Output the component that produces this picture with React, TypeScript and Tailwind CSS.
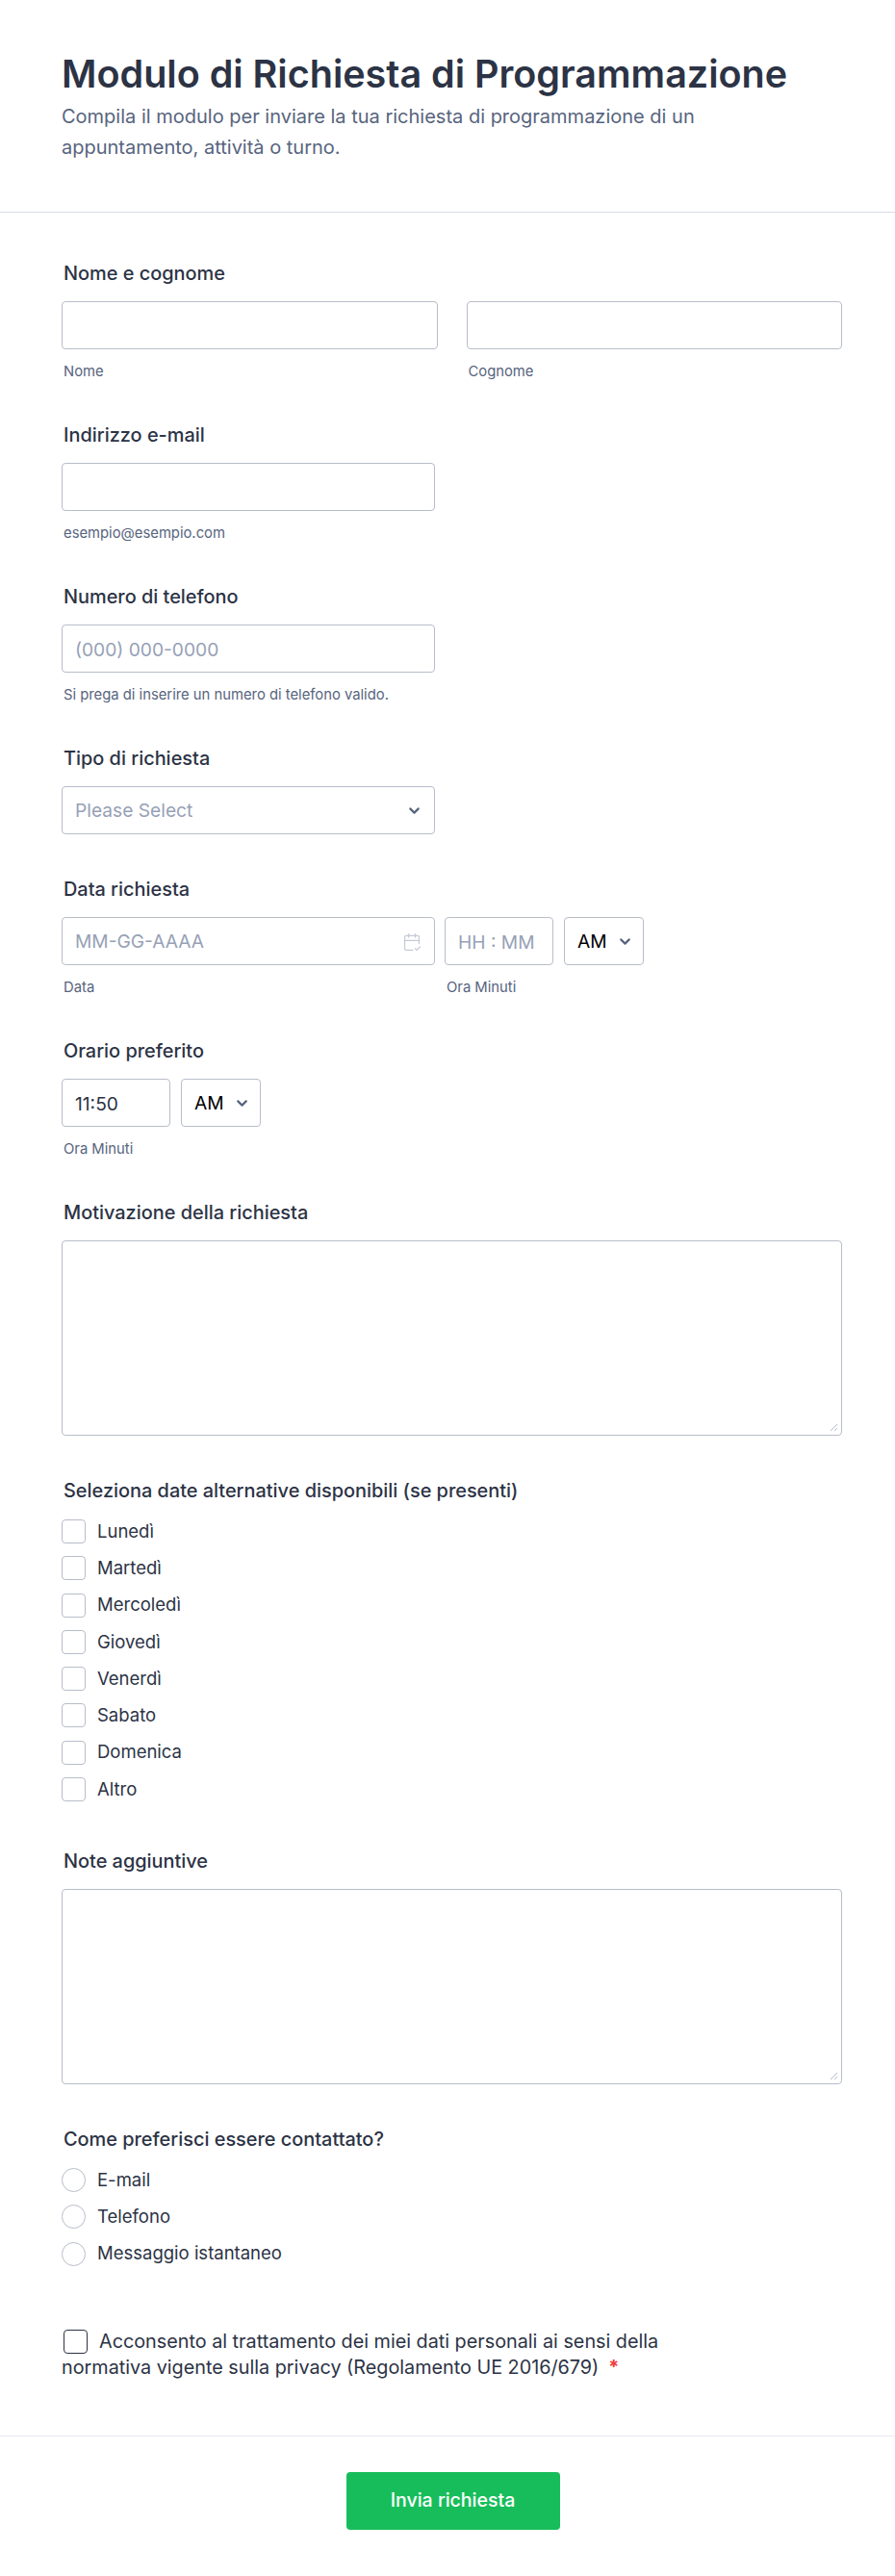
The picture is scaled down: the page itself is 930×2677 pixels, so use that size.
import React from 'react';
import { CalendarCheck2, ChevronDown } from 'lucide-react';

const inputClass =
  'h-[50px] w-full rounded-[4px] border border-[#b8bdc9] bg-white px-[13px] pt-[1px] text-[19.2px] text-[#2c3345] outline-none placeholder:text-[#97a1b6]';

const labelClass = 'pl-[2px] text-[19.9px] leading-[24px] font-medium text-[#2c3345]';

function Label({ children }: { children: React.ReactNode }) {
  return <div className={`mb-[17px] ${labelClass}`}>{children}</div>;
}

function Sub({ children }: { children: React.ReactNode }) {
  return <div className="mt-[14px] pl-[2px] text-[14.8px] leading-[18px] text-[#57647e]">{children}</div>;
}

function Ampm() {
  return (
    <div className="ml-[1px] flex h-[50px] w-[83px] shrink-0 items-center justify-between rounded-[4px] border border-[#b8bdc9] bg-white pt-[1px] pr-[10px] pl-[13px] text-[19.2px] text-black">
      <span>AM</span>
      <ChevronDown className="h-[17px] w-[17px] text-[#57647e]" strokeWidth={3} />
    </div>
  );
}

function CheckRow({ label, round }: { label: string; round?: boolean }) {
  return (
    <div className="flex h-[25px] items-center gap-[12px] text-[18.5px] text-[#2c3345]">
      <span className={`h-[25px] w-[25px] shrink-0 border border-[#b8bdc9] bg-white ${round ? 'rounded-full' : 'rounded-[4px]'}`} />
      <span>{label}</span>
    </div>
  );
}

function TextArea() {
  return (
    <div className="relative">
      <textarea className="block h-[203px] w-full resize-none rounded-[4px] border border-[#b8bdc9] bg-white outline-none" />
      <svg className="absolute right-[4px] bottom-[4px] h-[9px] w-[9px]" viewBox="0 0 9 9" fill="none" stroke="#b8bdc9" strokeWidth="1">
        <path d="M1 8L8 1M5 8L8 5" />
      </svg>
    </div>
  );
}

const days = ['Lunedì', 'Martedì', 'Mercoledì', 'Giovedì', 'Venerdì', 'Sabato', 'Domenica', 'Altro'];
const contacts = ['E-mail', 'Telefono', 'Messaggio istantaneo'];

export default function App() {
  return (
    <div className="min-h-[2677px] w-[930px] bg-white font-['Inter',sans-serif]">
      <header className="h-[221px] border-b border-[#d8dae9] px-[64px] pt-[50px]">
        <h1 className="text-[39.5px] leading-[54px] font-semibold text-[#2c3345]">Modulo di Richiesta di Programmazione</h1>
        <p className="mt-[1px] w-[760px] text-[20px] leading-[32px] text-[#57647e]">
          Compila il modulo per inviare la tua richiesta di programmazione di un appuntamento, attività o turno.
        </p>
      </header>

      <form className="flex flex-col gap-[45px] px-[64px] pt-[51px]">
        <div>
          <Label>Nome e cognome</Label>
          <div className="grid w-[811px] grid-cols-2 gap-[30px]">
            <div>
              <input className={inputClass} />
              <Sub>Nome</Sub>
            </div>
            <div>
              <input className={inputClass} />
              <Sub>Cognome</Sub>
            </div>
          </div>
        </div>

        <div className="w-[388px]">
          <Label>Indirizzo e-mail</Label>
          <input className={inputClass} />
          <Sub>esempio@esempio.com</Sub>
        </div>

        <div className="w-[388px]">
          <Label>Numero di telefono</Label>
          <input className={inputClass} placeholder="(000) 000-0000" />
          <Sub>Si prega di inserire un numero di telefono valido.</Sub>
        </div>

        <div className="w-[388px]">
          <Label>Tipo di richiesta</Label>
          <div className="flex h-[50px] items-center justify-between rounded-[4px] border border-[#b8bdc9] bg-white pt-[1px] pr-[12px] pl-[13px] text-[19.2px] text-[#97a1b6]">
            <span>Please Select</span>
            <ChevronDown className="h-[17px] w-[17px] text-[#57647e]" strokeWidth={3} />
          </div>
        </div>

        <div>
          <Label>Data richiesta</Label>
          <div className="flex gap-[10px]">
            <div className="w-[388px]">
              <div className="flex h-[50px] items-center justify-between rounded-[4px] border border-[#b8bdc9] bg-white pt-[1px] pr-[13px] pl-[13px] text-[19.2px] text-[#97a1b6]">
                <span>MM-GG-AAAA</span>
                <CalendarCheck2 className="h-[20px] w-[20px] text-[#c5cad6]" strokeWidth={1.5} />
              </div>
              <Sub>Data</Sub>
            </div>
            <div className="w-[113px]">
              <input className={inputClass} placeholder="HH : MM" />
              <Sub>Ora Minuti</Sub>
            </div>
            <Ampm />
          </div>
        </div>

        <div>
          <Label>Orario preferito</Label>
          <div className="flex gap-[10px]">
            <div className="w-[113px]">
              <input className={inputClass} defaultValue="11:50" />
              <Sub>Ora Minuti</Sub>
            </div>
            <Ampm />
          </div>
        </div>

        <div className="w-[811px]">
          <Label>Motivazione della richiesta</Label>
          <TextArea />
        </div>

        <div>
          <div className={`mb-[18px] ${labelClass}`}>Seleziona date alternative disponibili (se presenti)</div>
          <div className="flex flex-col gap-[13.3px]">
            {days.map((d) => (
              <CheckRow key={d} label={d} />
            ))}
          </div>
        </div>

        <div className="mt-[5px] w-[811px]">
          <Label>Note aggiuntive</Label>
          <TextArea />
        </div>

        <div>
          <div className={`mb-[18px] ${labelClass}`}>Come preferisci essere contattato?</div>
          <div className="flex flex-col gap-[13.3px]">
            {contacts.map((c) => (
              <CheckRow key={c} label={c} round />
            ))}
          </div>
        </div>

        <div className="mt-[20px] w-[660px] text-[19.8px] leading-[27px] text-[#2c3345]">
          <span className="mr-[12px] ml-[2px] inline-block h-[25px] w-[25px] rounded-[4px] border border-[#2c3345] bg-white align-[-6px]" />
          Acconsento al trattamento dei miei dati personali ai sensi della normativa vigente sulla privacy (Regolamento UE 2016/679)
          <span className="ml-[10px] font-bold text-[#f23a3c]">*</span>
        </div>
      </form>

      <footer className="mt-[57px] flex justify-center border-t border-[#e8e9f2] pt-[37px] pl-[11px]">
        <button type="button" className="h-[60px] w-[222px] rounded-[4px] bg-[#18bd5b] text-[19.5px] font-medium text-white">
          Invia richiesta
        </button>
      </footer>
    </div>
  );
}
